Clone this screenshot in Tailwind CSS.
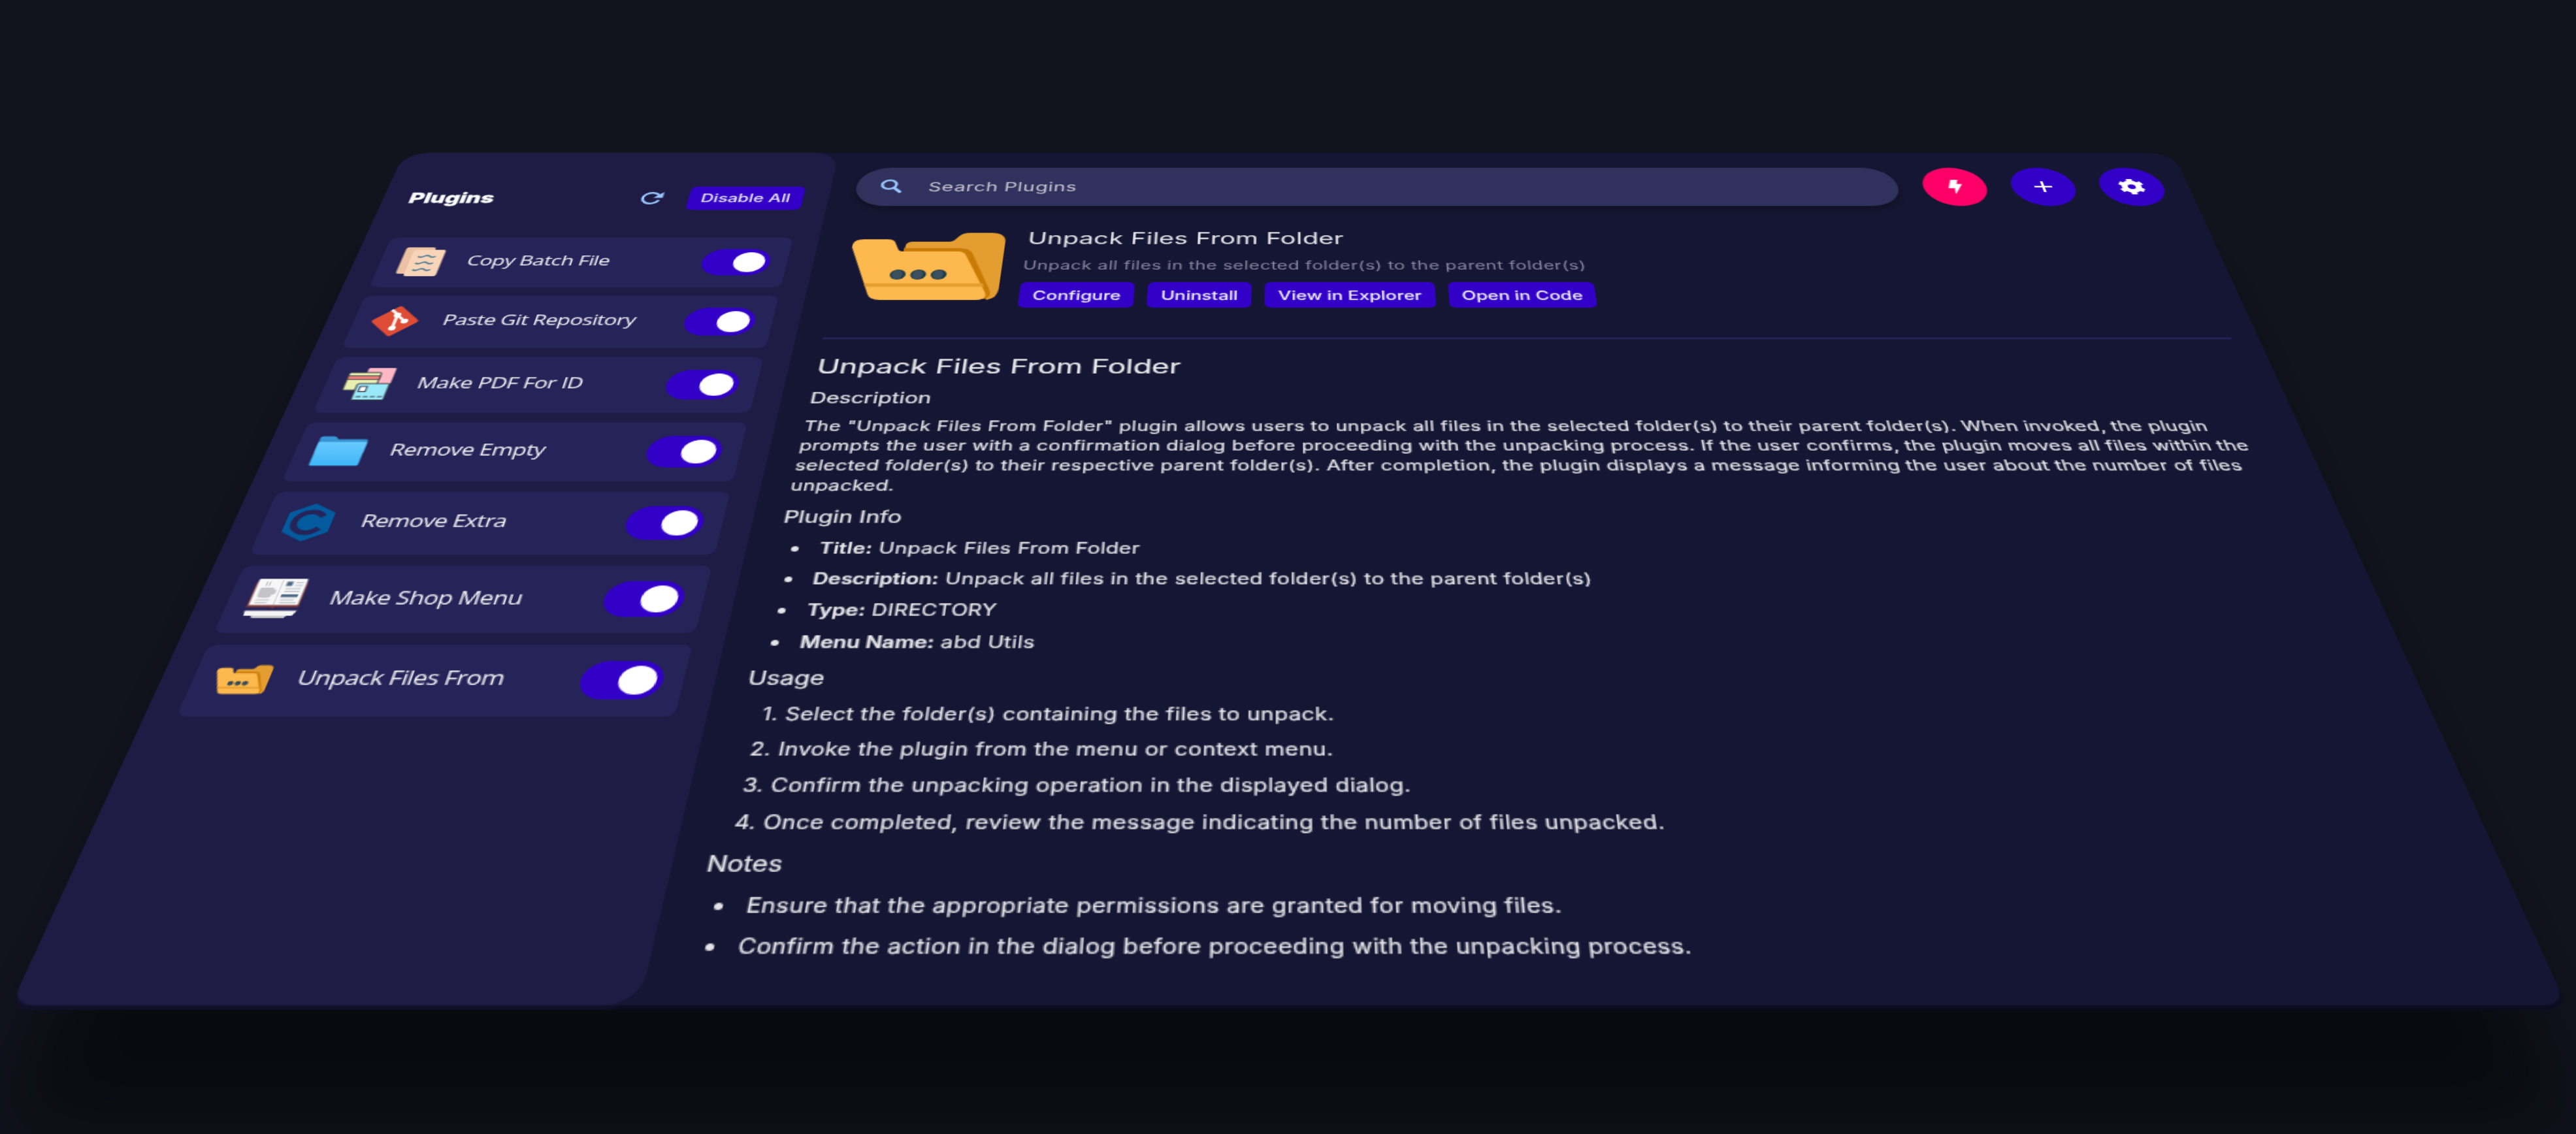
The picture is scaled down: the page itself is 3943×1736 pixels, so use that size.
<!DOCTYPE html>
<html lang="en">
<head>
<meta charset="utf-8">
<title>Plugins</title>
<script src="https://cdn.jsdelivr.net/npm/@tailwindcss/browser@4"></script>
</head>
<body class="h-[1736px] w-[3943px] overflow-hidden bg-[#11131d] font-['Inter',sans-serif] text-[#e6e6ea]">

<svg class="hidden">
  <symbol id="unpack" viewBox="0 0 117 81">
    <path fill="#e39d30" d="M40 24l1-9q.5-4 5-4h28q3 0 5-4l2-3q2.500-4 8-4h16q12 0 12 12v55q0 12-8 14l-30-50z"/>
    <path fill="#c97b05" d="M40 23v-4h43q7 0 10 6l17 44q3 8-3 11l-8-2-24-50z"/>
    <path fill="#fdb94d" d="M0 18Q-1 8 8 8h18q5 0 6.500 4l3 8q1 3 4 3h42q5 0 7 5l18 43q4 10-6 10H29q-8 0-10-7z"/>
    <path fill="#e39d30" d="M15 61.500h89l1.500 4H16z"/>
    <g fill="#1b3d4a"><circle cx="39" cy="51" r="6"/><circle cx="54.500" cy="51" r="6"/><circle cx="70" cy="51" r="6"/></g>
    <g fill="#3c4f5e"><ellipse cx="38.500" cy="51" rx="4" ry="5.500"/><ellipse cx="54" cy="51" rx="4" ry="5.500"/><ellipse cx="69.500" cy="51" rx="4" ry="5.500"/></g>
  </symbol>
</svg>

<div class="relative h-[800px] w-[1424px] origin-top-left [transform:matrix3d(1.90112,0,0,0,-0.76028,1.04001,0,-0.00038542,0,0,1,0,619,234,0,1)]">

  <!-- lower edge of the slab and the shadow it casts -->
  <div class="absolute inset-0 -z-10 rounded-[20px] shadow-[0_100px_50px_-25px_rgb(0_0_0/0.5)]"></div>
  <div class="absolute inset-x-0 top-[3.400px] flex h-[799px] rounded-t-[20px] rounded-b-[12px] bg-[#0c0c20] overflow-hidden">
    <div class="w-[350px] rounded-r-[20px] bg-[#120f29]"></div>
  </div>

  <div class="relative flex h-[799px] w-full overflow-hidden rounded-t-[20px] rounded-b-[12px] bg-[#151633]">

    <aside class="flex w-[350px] shrink-0 flex-col gap-2.5 rounded-r-[20px] bg-[#1e1c44] p-5 pt-[19.500px]">
      <header class="flex h-20 items-center">
        <h1 class="grow pl-[0.500px] text-[18px] leading-none font-extrabold text-white [-webkit-text-stroke:0.300px_#fff]">Plugins</h1>
        <svg class="mr-[20px] size-[18px]" viewBox="0 0 18 18" fill="none"><path d="M15 11.500A6.800 6.800 0 1 1 14.200 5" stroke="#99c6ff" stroke-width="2.200"/><path d="M17.500 1v7.400h-7.400z" fill="#99c6ff"/></svg>
        <button class="h-[30px] rounded-[5px] bg-[#3300c8] px-2.5 text-sm leading-none font-medium whitespace-nowrap">Disable All</button>
      </header>

      <ul class="flex flex-col gap-2.5 font-['Open_Sans',sans-serif] text-base tracking-[-0.320px] text-[#f4f4f8]">
        <li class="flex h-[60px] items-center rounded-[6px] bg-[#252357] px-[13px]">
          <svg class="size-[35px]" viewBox="0 0 35 35"><rect x="2.500" y="0" width="22.500" height="32" rx="2" fill="#ecc2a4"/><rect x="9" y="3" width="24.500" height="32" rx="2" fill="#f8d4b8"/><path d="M14 11q2 2 4.500 0t4.500 0 4.500 0M14 19q2 2 4.500 0t4.500 0 4.500 0M14 27q2 2 4.500 0t4.500 0 4.500 0" fill="none" stroke="#41758f" stroke-width="1.300"/></svg>
          <span class="grow pb-[3.500px] pl-[18px]">Copy Batch File</span>
          <span class="flex h-8 w-[52px] items-center justify-end rounded-full bg-[#3300c8] pr-1"><i class="size-6 rounded-full bg-white"></i></span>
        </li>
        <li class="flex h-[60px] items-center rounded-[6px] bg-[#252357] px-[13px]">
          <svg class="size-[35px] overflow-visible" viewBox="0 0 35 35"><rect x="4.800" y="4.800" width="25.400" height="25.400" rx="2" fill="#de4c36" transform="rotate(45 17.500 17.500)"/><g stroke="#fff" stroke-width="2.300" fill="none"><path d="M12 4.500l5.500 5.500v15M17.500 10.500l7 7"/></g><g fill="#fff"><circle cx="17.500" cy="10.500" r="2.700"/><circle cx="24.500" cy="17.500" r="2.700"/><circle cx="17.500" cy="25.500" r="2.700"/></g></svg>
          <span class="grow pb-[3.500px] pl-[18px] tracking-[-0.400px]">Paste Git Repository</span>
          <span class="flex h-8 w-[52px] items-center justify-end rounded-full bg-[#3300c8] pr-1"><i class="size-6 rounded-full bg-white"></i></span>
        </li>
        <li class="flex h-[60px] items-center rounded-[6px] bg-[#252357] px-[13px]">
          <svg class="size-[35px]" viewBox="0 0 35 35"><rect x="13.500" y="0" width="20" height="17" rx="1" fill="#ffb9c6"/><rect x="1" y="5" width="23" height="19" rx="1" fill="#e6efb0" stroke="#3c3c46"/><path d="M1 8.500h23v4H1z" fill="#e8807c" stroke="#3c3c46" stroke-width=".8"/><rect x="10" y="17" width="23" height="17.500" rx="1" fill="#98e8f8" stroke="#3c3c46"/><rect x="12.800" y="20" width="5" height="5.500" fill="#fff" stroke="#3c3c46"/><path d="M12.500 31h19" stroke="#3c3c46" stroke-dasharray="3.500 1.600"/></svg>
          <span class="grow pb-[3.500px] pl-[18px] tracking-[-0.280px]">Make PDF For ID</span>
          <span class="flex h-8 w-[52px] items-center justify-end rounded-full bg-[#3300c8] pr-1"><i class="size-6 rounded-full bg-white"></i></span>
        </li>
        <li class="flex h-[60px] items-center rounded-[6px] bg-[#252357] px-[13px]">
          <svg class="size-[35px]" viewBox="0 0 35 35"><defs><linearGradient id="blue" x2="0" y2="1"><stop stop-color="#68caff"/><stop offset="1" stop-color="#3fb5f7"/></linearGradient></defs><path d="M.5 15V4q0-1.500 1.500-1.500h8q1.500 0 2.500 1.800t2 1.200H33q1.500 0 1.500 1.500v12H.5z" fill="#3796d3"/><path d="M.5 9q0-.7.7-.7h32.600q.7 0 .7.700v22q0 1.200-1.200 1.200H1.700Q.5 32.200.5 31z" fill="url(#blue)"/></svg>
          <span class="grow pb-[3.500px] pl-[18px]">Remove Empty</span>
          <span class="flex h-8 w-[52px] items-center justify-end rounded-full bg-[#3300c8] pr-1"><i class="size-6 rounded-full bg-white"></i></span>
        </li>
        <li class="flex h-[60px] items-center rounded-[6px] bg-[#252357] px-[13px]">
          <svg class="size-[35px] overflow-visible" viewBox="0 0 35 35"><path d="M17.500.500l14.500 8.300v17.400l-14.500 8.300-14.500-8.300V8.800z" fill="#035a9d" stroke="#035a9d" stroke-width="2" stroke-linejoin="round"/><path d="M25.800 12A9.900 9.900 0 1 0 25.800 23" fill="none" stroke="#252357" stroke-width="4.400"/></svg>
          <span class="grow pb-[3.500px] pl-[18px] tracking-[-0.400px]">Remove Extra</span>
          <span class="flex h-8 w-[52px] items-center justify-end rounded-full bg-[#3300c8] pr-1"><i class="size-6 rounded-full bg-white"></i></span>
        </li>
        <li class="flex h-[60px] items-center rounded-[6px] bg-[#252357] px-[13px]">
          <svg class="size-[35px]" viewBox="0 0 35 35"><path d="M.5 3.500h34v22H19l-1.500 1.200-1.500-1.200H.5z" fill="#7d3b3a"/><path d="M1.500 1q0-1 1-1h30q1 0 1 1v22.500h-32z" fill="#f7f7f7"/><path d="M17 1h1v22h-1z" fill="#d9d9de"/><path d="M5 8.500h8v6.500q0 1.500-1.500 1.500h-5Q5 16.500 5 15zM13 10h2v3.500h-2M7.500 2.500v4M9.500 2.500v4M4.500 19h9M4.500 21.500h8" fill="#c4c4c8" stroke="#c4c4c8"/><path d="M20.500 2.500h4v4h-4zM20 14h11v2.500H20z" fill="#4f6a86"/><path d="M26.500 3.500h5M26.500 6h5M21 9h10M21 11.500h10M20.500 19h9M20.500 21.500h11" stroke="#bcc2cb"/><path d="M.5 28.500h34l-2 4.500h-4l-.8 2H7l-.8-2h-5z" fill="#f4f4f4"/><path d="M6.200 33h22.300l-.8 2H7z" fill="#c9c9c9"/></svg>
          <span class="grow pb-[2px] pl-[18px]">Make Shop Menu</span>
          <span class="flex h-8 w-[52px] items-center justify-end rounded-full bg-[#3300c8] pr-1"><i class="size-6 rounded-full bg-white"></i></span>
        </li>
        <li class="flex h-[60px] items-center rounded-[6px] bg-[#252357] px-[13px]">
          <svg class="size-[35px]"><use href="#unpack"/></svg>
          <span class="grow pb-[3.500px] pl-[18px] tracking-[-0.370px]">Unpack Files From</span>
          <span class="flex h-8 w-[52px] items-center justify-end rounded-full bg-[#3300c8] pr-1"><i class="size-6 rounded-full bg-white"></i></span>
        </li>
      </ul>
    </aside>

    <main class="grow px-5 pt-[19.500px]">
      <div class="flex h-[50px] gap-5">
        <label class="flex grow items-center rounded-full bg-[#31315d] pl-[18px] shadow-[0_4px_10px_rgb(0_0_0/0.35)]">
          <svg class="size-[19px]" viewBox="0 0 19 19" fill="none" stroke="#99c6ff"><circle cx="7.800" cy="7.300" r="5.600" stroke-width="2.300"/><path d="M12 11.500l5 5.300" stroke-width="2.800" stroke-linecap="round"/></svg>
          <span class="pt-px pl-5 text-base tracking-[0.350px] text-[#c5c5d2]">Search Plugins</span>
        </label>
        <button class="flex size-[50px] items-center justify-center rounded-full bg-[#fd0067]"><svg class="h-[18px] w-3.5" viewBox="0 0 14 18"><path d="M5.500 0h5L8.800 5.800H13L6.200 18 7 10.800H2z" fill="#fff" stroke="#fff" stroke-linejoin="round" stroke-width=".5"/></svg></button>
        <button class="flex size-[50px] items-center justify-center rounded-full bg-[#3300c8]"><svg class="size-3.5" viewBox="0 0 14 14"><path d="M7 0v14M0 7h14" stroke="#fff" stroke-width="2.100"/></svg></button>
        <button class="flex size-[50px] items-center justify-center rounded-full bg-[#3300c8]"><svg class="size-5" viewBox="0 0 20 20" fill="none" stroke="#fff"><circle cx="10" cy="10" r="5.500" stroke-width="4.800"/><path d="M10 0v4M10 16v4M1.300 5l3.500 2M15.200 13l3.500 2M1.300 15l3.500-2M15.200 7l3.500-2" stroke-width="4.600"/></svg></button>
      </div>

      <section class="mt-[18.500px] flex h-[142px] border-b-2 border-[#25225c] pt-[11px]">
        <svg class="mt-[5px] ml-[7px] h-[81px] w-[117px]"><use href="#unpack"/></svg>
        <div class="pl-4">
          <h2 class="h-6 pl-px text-xl leading-[24px] tracking-[0.120px]">Unpack Files From Folder</h2>
          <p class="h-[41px] pt-[11px] text-sm leading-5 tracking-[0.270px] text-[#88859f]">Unpack all files in the selected folder(s) to the parent folder(s)</p>
          <div class="flex gap-2.5 text-sm leading-none font-medium tracking-[-0.030px] whitespace-nowrap text-[#f0f0f6]">
            <button class="h-[30px] rounded-[5px] bg-[#3300c8] px-2.5 pt-px">Configure</button>
            <button class="h-[30px] rounded-[5px] bg-[#3300c8] px-2.5 pt-px">Uninstall</button>
            <button class="h-[30px] rounded-[5px] bg-[#3300c8] px-2.5 pt-px">View in Explorer</button>
            <button class="h-[30px] rounded-[5px] bg-[#3300c8] px-2.5 pt-px">Open in Code</button>
          </div>
        </div>
      </section>

      <article class="pt-[11px] pl-[0.400px] text-sm [-webkit-text-stroke:0.150px_#e6e6ea]">
        <h1 class="text-[22px] leading-[38px] tracking-[-0.050px]">Unpack Files From Folder</h1>
        <h2 class="text-base leading-[30px]">Description</h2>
        <p class="mt-[5px] leading-5 tracking-[0.235px] whitespace-nowrap">The "Unpack Files From Folder" plugin allows users to unpack all files in the selected folder(s) to their parent folder(s). When invoked, the plugin<br>prompts the user with a confirmation dialog before proceeding with the unpacking process. If the user confirms, the plugin moves all files within the<br>selected folder(s) to their respective parent folder(s). After completion, the plugin displays a message informing the user about the number of files<br>unpacked.</p>
        <h2 class="mt-[5px] text-base leading-[30px]">Plugin Info</h2>
        <ul class="mt-px list-disc pl-[25.800px] leading-7 tracking-[0.240px]">
          <li class="pl-[2.500px]"><b class="font-semibold">Title:</b> Unpack Files From Folder</li>
          <li class="pl-[2.500px]"><b class="font-semibold tracking-[0.030px]">Description:</b> Unpack all files in the selected folder(s) to the parent folder(s)</li>
          <li class="pl-[2.500px]"><b class="font-semibold tracking-[0.030px]">Type:</b> DIRECTORY</li>
          <li class="pl-[2.500px]"><b class="font-semibold tracking-[0.030px]">Menu Name:</b> abd Utils</li>
        </ul>
        <h2 class="mt-px text-base leading-[30px]">Usage</h2>
        <ol class="mt-px list-decimal pl-[28.300px] leading-7 tracking-[0.240px]">
          <li class="marker:[font-variant-numeric:normal]">Select the folder(s) containing the files to unpack.</li>
          <li class="marker:[font-variant-numeric:normal]">Invoke the plugin from the menu or context menu.</li>
          <li class="marker:[font-variant-numeric:normal]">Confirm the unpacking operation in the displayed dialog.</li>
          <li class="marker:[font-variant-numeric:normal]">Once completed, review the message indicating the number of files unpacked.</li>
        </ol>
        <h2 class="mt-px text-base leading-[30px]">Notes</h2>
        <ul class="mt-px list-disc pl-[25.800px] leading-7 tracking-[0.240px]">
          <li class="pl-[2.500px]">Ensure that the appropriate permissions are granted for moving files.</li>
          <li class="pl-[2.500px]">Confirm the action in the dialog before proceeding with the unpacking process.</li>
        </ul>
      </article>
    </main>
  </div>
</div>
</body>
</html>
